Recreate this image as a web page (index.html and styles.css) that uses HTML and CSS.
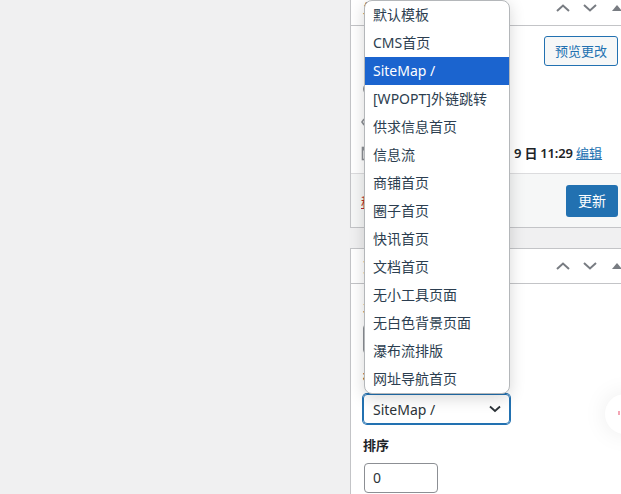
FILE: index.html
```html
<!DOCTYPE html>
<html lang="zh-CN">
<head>
    <meta charset="UTF-8">
    <meta name="viewport" content="width=device-width, initial-scale=1.0">
    <title>编辑页面</title>
    <link rel="stylesheet" href="styles.css">
</head>
<body>

    <div class="page">
        <div class="main"></div>

        <div class="sidebar">
            <!-- 发布 -->
            <div class="postbox">
                <div class="postbox-header">
                    <h2 class="hndle">发布</h2>
                    <div class="handle-actions">
                        <span class="handle-btn"><svg width="14" height="8" viewBox="0 0 14 8"><path d="M1 7L7 1.5L13 7" fill="none" stroke="#787c82" stroke-width="2"/></svg></span>
                        <span class="handle-btn"><svg width="14" height="8" viewBox="0 0 14 8"><path d="M1 1L7 6.5L13 1" fill="none" stroke="#787c82" stroke-width="2"/></svg></span>
                        <span class="handle-btn"><svg width="10" height="6" viewBox="0 0 10 6"><path d="M0 6L5 0L10 6Z" fill="#787c82"/></svg></span>
                    </div>
                </div>
                <div class="inside">
                    <div class="minor-actions">
                        <span class="button">预览更改</span>
                    </div>
                    <div class="misc-pub">
                        <div class="misc-row">
                            <svg class="misc-icon" width="16" height="16" viewBox="0 0 16 16"><path d="M8 1C5 1 3 3.2 3 6c0 3 5 9 5 9s5-6 5-9c0-2.8-2-5-5-5z" fill="none" stroke="#8c8f94" stroke-width="2"/></svg>状态：<b>已发布</b> <a href="#">编辑</a>
                        </div>
                        <div class="misc-row">
                            <svg class="misc-icon" width="18" height="16" viewBox="0 0 18 16"><path d="M1 8C3 4.5 6 3 9 3s6 1.5 8 5c-2 3.5-5 5-8 5S3 11.5 1 8z" fill="none" stroke="#8c8f94" stroke-width="1.6"/><circle cx="9" cy="8" r="2.5" fill="#8c8f94"/></svg>可见性：<b>公开</b> <a href="#">编辑</a>
                        </div>
                        <div class="misc-row">
                            <svg class="misc-icon" width="16" height="16" viewBox="0 0 16 16"><rect x="1.5" y="2.5" width="13" height="12" fill="none" stroke="#8c8f94" stroke-width="1.6"/><rect x="1.5" y="2.5" width="13" height="3" fill="#8c8f94"/></svg>已发布于：<b>2023年4月 9 日 11:29</b> <a href="#">编辑</a>
                        </div>
                    </div>
                    <div class="major-actions">
                        <a href="#" class="trash">移至回收站</a>
                        <span class="button-primary">更新</span>
                    </div>
                </div>
            </div>

            <!-- 页面属性 -->
            <div class="postbox">
                <div class="postbox-header">
                    <h2 class="hndle">页面属性</h2>
                    <div class="handle-actions">
                        <span class="handle-btn"><svg width="14" height="8" viewBox="0 0 14 8"><path d="M1 7L7 1.5L13 7" fill="none" stroke="#787c82" stroke-width="2"/></svg></span>
                        <span class="handle-btn"><svg width="14" height="8" viewBox="0 0 14 8"><path d="M1 1L7 6.5L13 1" fill="none" stroke="#787c82" stroke-width="2"/></svg></span>
                        <span class="handle-btn"><svg width="10" height="6" viewBox="0 0 10 6"><path d="M0 6L5 0L10 6Z" fill="#787c82"/></svg></span>
                    </div>
                </div>
                <div class="inside attrs">
                    <p class="attr-label">父级</p>
                    <div class="select">（无父级）</div>
                    <p class="attr-label">模板</p>
                    <div class="select is-focus">
                        <span>SiteMap /</span>
                        <svg width="12" height="8" viewBox="0 0 12 8"><path d="M1 1.5L6 6L11 1.5" fill="none" stroke="#2c3338" stroke-width="1.8"/></svg>
                    </div>
                    <p class="attr-label">排序</p>
                    <div class="number">0</div>
                </div>
            </div>
        </div>
    </div>

    <!-- 模板下拉列表 -->
    <ul class="dropdown">
        <li>默认模板</li>
        <li>CMS首页</li>
        <li class="selected">SiteMap /</li>
        <li>[WPOPT]外链跳转</li>
        <li>供求信息首页</li>
        <li>信息流</li>
        <li>商铺首页</li>
        <li>圈子首页</li>
        <li>快讯首页</li>
        <li>文档首页</li>
        <li>无小工具页面</li>
        <li>无白色背景页面</li>
        <li>瀑布流排版</li>
        <li>网址导航首页</li>
    </ul>

    <div class="float-btn"><span class="float-dot"></span></div>

</body>
</html>
```

FILE: styles.css
```css
/* 基本 */
body {
    font-family: "Noto Sans", "Noto Sans CJK SC", sans-serif;
    margin: 0;
    padding: 0;
    width: 621px;
    height: 494px;
    overflow: hidden;
    background-color: #f0f0f1;
    color: #1d2327;
    font-size: 13px;
}

.page {
    display: flex;
}

.main {
    flex: 0 0 350px;
}

.sidebar {
    flex: 0 0 281px;
    margin-top: -10px;
    display: flex;
    flex-direction: column;
    gap: 20px;
}

/* 盒子 */
.postbox {
    background: #fff;
    border: 1px solid #c3c4c7;
}

.postbox-header {
    display: flex;
    align-items: center;
    justify-content: space-between;
    height: 34px;
    border-bottom: 1px solid #c3c4c7;
}

.hndle {
    margin: 0;
    padding-left: 12px;
    font-size: 14px;
    font-weight: 600;
}

.handle-actions {
    display: flex;
}

.handle-btn {
    width: 27px;
    height: 34px;
    display: flex;
    align-items: center;
    justify-content: center;
}

/* 发布 */
.minor-actions {
    display: flex;
    justify-content: flex-end;
    padding: 10px 12px;
}

.button {
    display: inline-block;
    height: 28px;
    line-height: 28px;
    padding: 0 10px;
    border: 1px solid #2271b1;
    border-radius: 3px;
    background: #f6f7f7;
    color: #2271b1;
    font-size: 13px;
}

.misc-pub {
    padding-bottom: 4px;
}

.misc-row {
    height: 31px;
    line-height: 31px;
    padding-left: 10px;
    white-space: nowrap;
}

.misc-row b {
    font-weight: 600;
    letter-spacing: -0.2px;
}

.misc-row a {
    color: #2271b1;
}

.misc-icon {
    vertical-align: middle;
    margin: -3px 7px 0 0;
}

.major-actions {
    display: flex;
    align-items: center;
    justify-content: space-between;
    padding: 11px 12px 10px 10px;
    background: #f6f7f7;
    border-top: 1px solid #dcdcde;
}

.trash {
    color: #b32d2e;
}

.button-primary {
    display: inline-block;
    height: 32px;
    line-height: 32px;
    padding: 0 12px;
    border-radius: 3px;
    background: #2271b1;
    color: #fff;
    font-size: 14px;
}

/* 页面属性 */
.attrs {
    padding: 0 12px 20px;
}

.attr-label {
    margin: 12px 0 8px;
    line-height: 20px;
    font-weight: 600;
}

.select.is-focus + .attr-label {
    margin-top: 11px;
}

.select {
    display: flex;
    align-items: center;
    justify-content: space-between;
    width: 147px;
    height: 30px;
    box-sizing: border-box;
    padding: 0 8px 0 9px;
    border: 1px solid #8c8f94;
    border-radius: 4px;
    font-size: 14px;
    color: #2c3338;
}

.select.is-focus {
    border-color: #2271b1;
    box-shadow: 0 0 0 1px #2271b1;
}

.number {
    width: 74px;
    height: 30px;
    box-sizing: border-box;
    margin-left: 1px;
    padding-left: 8px;
    line-height: 28px;
    border: 1px solid #8c8f94;
    border-radius: 4px;
    font-size: 14px;
    color: #2c3338;
}

/* 下拉列表 */
.dropdown {
    position: absolute;
    top: 0;
    left: 364px;
    width: 146px;
    box-sizing: border-box;
    margin: 0;
    padding: 0;
    list-style: none;
    background: #fff;
    border: 1px solid #b4b7ba;
    border-radius: 8px;
    box-shadow: 0 4px 16px rgba(0, 0, 0, 0.16);
    overflow: hidden;
}

.dropdown li {
    height: 28px;
    line-height: 28px;
    padding-left: 8px;
    font-size: 14px;
    color: #2c3e50;
    white-space: nowrap;
}

.dropdown li.selected {
    background: #1b64cf;
    color: #fff;
}

/* 右侧浮动按钮 */
.float-btn {
    position: absolute;
    top: 394px;
    left: 605px;
    width: 40px;
    height: 40px;
    border-radius: 50%;
    background: #fff;
    box-shadow: 0 0 24px rgba(0, 0, 0, 0.08);
}

.float-dot {
    position: absolute;
    top: 17px;
    left: 13px;
    width: 2px;
    height: 4px;
    background: #f4a6b5;
}
```
